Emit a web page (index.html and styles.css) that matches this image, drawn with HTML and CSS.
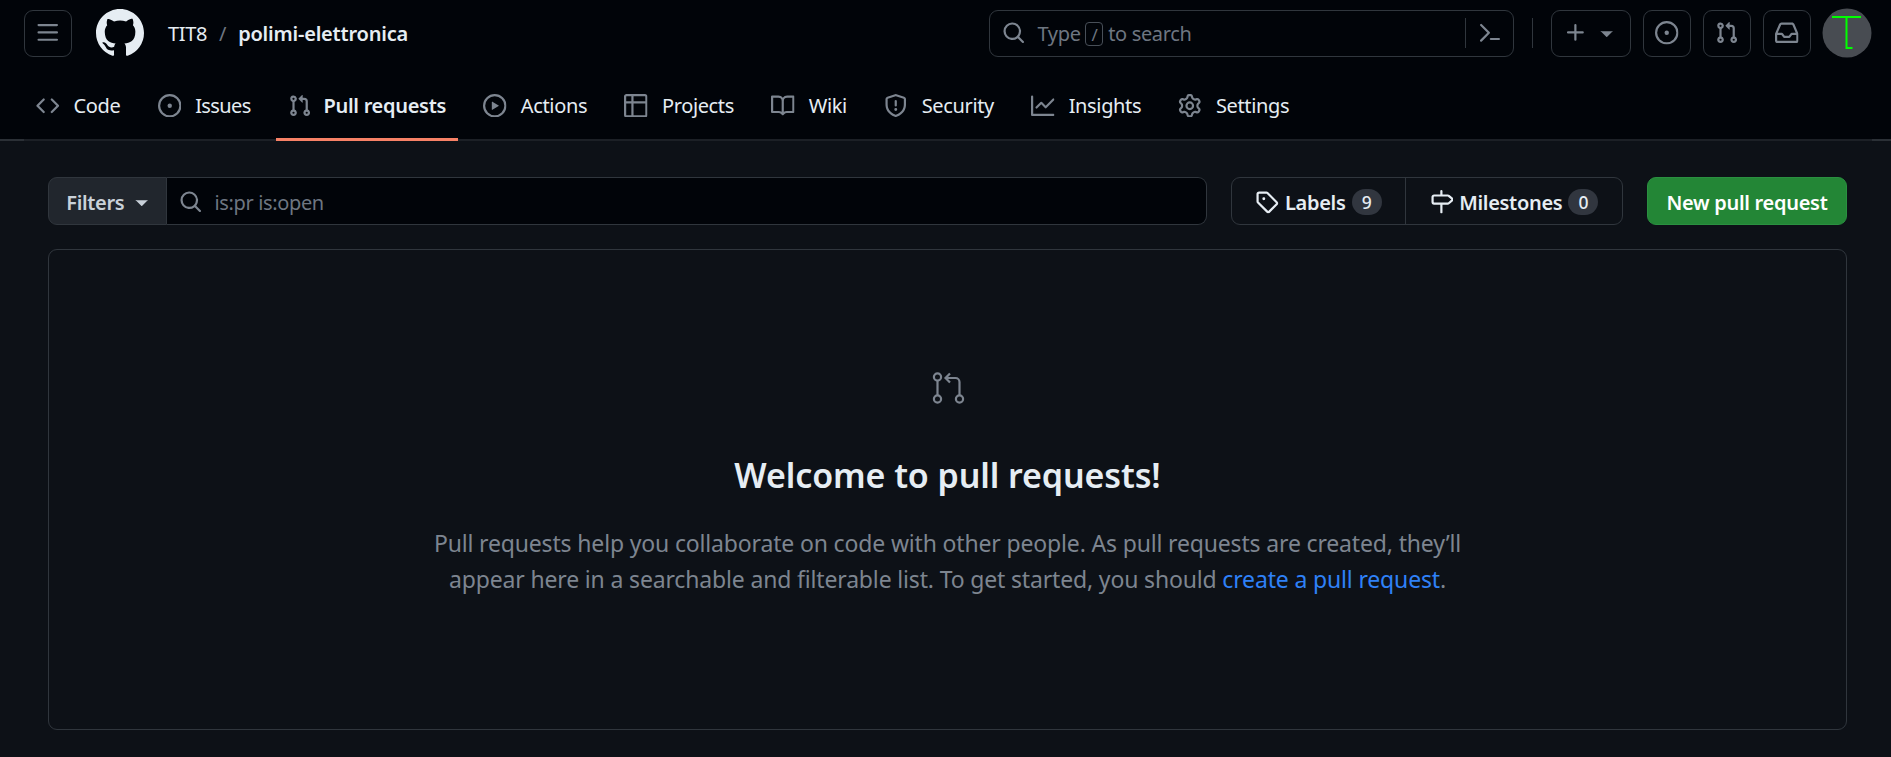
FILE: index.html
```html
<!DOCTYPE html>
<html lang="en">
<head>
    <meta charset="UTF-8">
    <meta name="viewport" content="width=device-width, initial-scale=1.0">
    <title>Pull requests · TIT8/polimi-elettronica</title>
    <link rel="stylesheet" href="styles.css">
</head>
<body>
    <svg class="sprite" xmlns="http://www.w3.org/2000/svg">
        <symbol id="i-bars" viewBox="0 0 16 16"><path d="M1 2.75A.75.75 0 0 1 1.75 2h12.5a.75.75 0 0 1 0 1.5H1.75A.75.75 0 0 1 1 2.75Zm0 5A.75.75 0 0 1 1.75 7h12.5a.75.75 0 0 1 0 1.5H1.75A.75.75 0 0 1 1 7.75ZM1.75 12h12.5a.75.75 0 0 1 0 1.5H1.75a.75.75 0 0 1 0-1.5Z"/></symbol>
        <symbol id="i-mark" viewBox="0 0 16 16"><path d="M8 0c4.42 0 8 3.58 8 8a8.013 8.013 0 0 1-5.45 7.59c-.4.08-.55-.17-.55-.38 0-.27.01-1.13.01-2.2 0-.75-.25-1.23-.54-1.48 1.78-.2 3.65-.88 3.65-3.95 0-.88-.31-1.59-.82-2.15.08-.2.36-1.02-.08-2.12 0 0-.67-.22-2.2.82-.64-.18-1.32-.27-2-.27-.68 0-1.36.09-2 .27-1.53-1.03-2.2-.82-2.2-.82-.44 1.1-.16 1.92-.08 2.12-.51.56-.82 1.28-.82 2.15 0 3.06 1.86 3.75 3.64 3.95-.23.2-.44.55-.51 1.07-.46.21-1.61.55-2.33-.66-.15-.24-.6-.83-1.23-.82-.67.01-.27.38.01.53.34.19.73.9.82 1.13.16.45.68 1.31 2.69.94 0 .67.01 1.3.01 1.49 0 .21-.15.45-.55.38A7.995 7.995 0 0 1 0 8c0-4.42 3.58-8 8-8Z"/></symbol>
        <symbol id="i-code" viewBox="0 0 16 16"><path d="m11.28 3.22 4.25 4.25a.75.75 0 0 1 0 1.06l-4.25 4.25a.749.749 0 0 1-1.275-.326.749.749 0 0 1 .215-.734L13.94 8l-3.72-3.72a.749.749 0 0 1 .326-1.275.749.749 0 0 1 .734.215Zm-6.56 0a.751.751 0 0 1 1.042.018.751.751 0 0 1 .018 1.042L2.06 8l3.72 3.72a.749.749 0 0 1-.326 1.275.749.749 0 0 1-.734-.215L.47 8.53a.75.75 0 0 1 0-1.06Z"/></symbol>
        <symbol id="i-issue" viewBox="0 0 16 16"><path d="M8 9.5a1.5 1.5 0 1 0 0-3 1.5 1.5 0 0 0 0 3Z"/><path d="M8 0a8 8 0 1 1 0 16A8 8 0 0 1 8 0ZM1.5 8a6.5 6.5 0 1 0 13 0 6.5 6.5 0 0 0-13 0Z"/></symbol>
        <symbol id="i-pr" viewBox="0 0 16 16"><path d="M1.5 3.25a2.25 2.25 0 1 1 3 2.122v5.256a2.251 2.251 0 1 1-1.5 0V5.372A2.25 2.25 0 0 1 1.5 3.25Zm5.677-.177L9.573.677A.25.25 0 0 1 10 .854V2.5h1A2.5 2.5 0 0 1 13.5 5v5.628a2.251 2.251 0 1 1-1.5 0V5a1 1 0 0 0-1-1h-1v1.646a.25.25 0 0 1-.427.177L7.177 3.427a.25.25 0 0 1 0-.354ZM3.75 2.5a.75.75 0 1 0 0 1.5.75.75 0 0 0 0-1.5Zm0 9.5a.75.75 0 1 0 0 1.5.75.75 0 0 0 0-1.5Zm8.25.75a.75.75 0 1 0 1.5 0 .75.75 0 0 0-1.5 0Z"/></symbol>
        <symbol id="i-play" viewBox="0 0 16 16"><path d="M8 0a8 8 0 1 1 0 16A8 8 0 0 1 8 0ZM1.5 8a6.5 6.5 0 1 0 13 0 6.5 6.5 0 0 0-13 0Zm4.879-2.773 4.264 2.559a.25.25 0 0 1 0 .428l-4.264 2.559A.25.25 0 0 1 6 10.559V5.442a.25.25 0 0 1 .379-.215Z"/></symbol>
        <symbol id="i-table" viewBox="0 0 16 16"><path d="M0 1.75C0 .784.784 0 1.75 0h12.5C15.216 0 16 .784 16 1.75v12.5A1.75 1.75 0 0 1 14.25 16H1.75A1.75 1.75 0 0 1 0 14.25ZM6.5 6.5v8h7.75a.25.25 0 0 0 .25-.25V6.5Zm8-1.5V1.75a.25.25 0 0 0-.25-.25H6.5V5Zm-13 1.5v7.75c0 .138.112.25.25.25H5v-8ZM5 5V1.5H1.75a.25.25 0 0 0-.25.25V5Z"/></symbol>
        <symbol id="i-book" viewBox="0 0 16 16"><path d="M0 1.75A.75.75 0 0 1 .75 1h4.253c1.227 0 2.317.59 3 1.501A3.743 3.743 0 0 1 11.006 1h4.245a.75.75 0 0 1 .75.75v10.5a.75.75 0 0 1-.75.75h-4.507a2.25 2.25 0 0 0-1.591.659l-.622.621a.75.75 0 0 1-1.06 0l-.622-.621A2.25 2.25 0 0 0 5.258 13H.75a.75.75 0 0 1-.75-.75Zm7.251 10.324.004-5.073-.002-2.253A2.25 2.25 0 0 0 5.003 2.5H1.5v9h3.757a3.75 3.75 0 0 1 1.994.574ZM8.755 4.75l-.004 7.322a3.752 3.752 0 0 1 1.992-.572H14.5v-9h-3.495a2.25 2.25 0 0 0-2.25 2.25Z"/></symbol>
        <symbol id="i-shield" viewBox="0 0 16 16"><path d="M7.467.133a1.748 1.748 0 0 1 1.066 0l5.25 1.68A1.75 1.75 0 0 1 15 3.48V7c0 1.566-.32 3.182-1.303 4.682-.983 1.498-2.585 2.813-5.032 3.855a1.697 1.697 0 0 1-1.33 0c-2.447-1.042-4.049-2.357-5.032-3.855C1.32 10.182 1 8.566 1 7V3.48a1.75 1.75 0 0 1 1.217-1.667Zm.61 1.429a.25.25 0 0 0-.153 0l-5.25 1.68a.25.25 0 0 0-.174.238V7c0 1.358.275 2.666 1.057 3.86.784 1.194 2.121 2.34 4.366 3.297a.196.196 0 0 0 .154 0c2.245-.956 3.582-2.104 4.366-3.298C13.225 9.666 13.5 8.36 13.5 7V3.48a.251.251 0 0 0-.174-.237l-5.25-1.68ZM8.75 4.75v3a.75.75 0 0 1-1.5 0v-3a.75.75 0 0 1 1.5 0ZM9 10.5a1 1 0 1 1-2 0 1 1 0 0 1 2 0Z"/></symbol>
        <symbol id="i-graph" viewBox="0 0 16 16"><path d="M1.5 1.75V13.5h13.75a.75.75 0 0 1 0 1.5H.75a.75.75 0 0 1-.75-.75V1.75a.75.75 0 0 1 1.5 0Zm14.28 2.53-5.25 5.25a.75.75 0 0 1-1.06 0L7 7.06 4.28 9.78a.751.751 0 0 1-1.042-.018.751.751 0 0 1-.018-1.042l3.25-3.25a.75.75 0 0 1 1.06 0L10 7.94l4.72-4.72a.751.751 0 0 1 1.042.018.751.751 0 0 1 .018 1.042Z"/></symbol>
        <symbol id="i-gear" viewBox="0 0 16 16"><path d="M8 0a8.2 8.2 0 0 1 .701.031C9.444.095 9.99.645 10.16 1.29l.288 1.107c.018.066.079.158.212.224.231.114.454.243.668.386.123.082.233.09.299.071l1.103-.303c.644-.176 1.392.021 1.82.63.27.385.506.792.704 1.218.315.675.111 1.422-.364 1.891l-.814.806c-.049.048-.098.147-.088.294.016.257.016.515 0 .772-.01.147.038.246.088.294l.814.806c.475.469.679 1.216.364 1.891a7.977 7.977 0 0 1-.704 1.217c-.428.61-1.176.807-1.82.63l-1.102-.302c-.067-.019-.177-.011-.3.071a5.909 5.909 0 0 1-.668.386c-.133.066-.194.158-.211.224l-.29 1.106c-.168.646-.715 1.196-1.458 1.26a8.006 8.006 0 0 1-1.402 0c-.743-.064-1.289-.614-1.458-1.26l-.289-1.106c-.018-.066-.079-.158-.212-.224a5.738 5.738 0 0 1-.668-.386c-.123-.082-.233-.09-.299-.071l-1.103.303c-.644.176-1.392-.021-1.82-.63a8.12 8.12 0 0 1-.704-1.218c-.315-.675-.111-1.422.363-1.891l.815-.806c.05-.048.098-.147.088-.294a6.214 6.214 0 0 1 0-.772c.01-.147-.038-.246-.088-.294l-.815-.806C.635 6.045.431 5.298.746 4.623a7.92 7.92 0 0 1 .704-1.217c.428-.61 1.176-.807 1.82-.63l1.102.302c.067.019.177.011.3-.071.214-.143.437-.272.668-.386.133-.066.194-.158.211-.224l.29-1.106C6.009.645 6.556.095 7.299.03 7.53.01 7.764 0 8 0Zm-.571 1.525c-.036.003-.108.036-.137.146l-.289 1.105c-.147.561-.549.967-.998 1.189-.173.086-.34.183-.5.29-.417.278-.97.423-1.529.27l-1.103-.303c-.109-.03-.175.016-.195.045-.22.312-.412.644-.573.99-.014.031-.021.11.059.19l.815.806c.411.406.562.957.53 1.456a4.709 4.709 0 0 0 0 .582c.032.499-.119 1.05-.53 1.456l-.815.806c-.081.08-.073.159-.059.19.162.346.353.677.573.989.02.03.085.076.195.046l1.102-.303c.56-.153 1.113-.008 1.53.27.161.107.328.204.501.29.447.222.85.629.997 1.189l.289 1.105c.029.109.101.143.137.146a6.6 6.6 0 0 0 1.142 0c.036-.003.108-.036.137-.146l.289-1.105c.147-.561.549-.967.998-1.189.173-.086.34-.183.5-.29.417-.278.97-.423 1.529-.27l1.103.303c.109.029.175-.016.195-.045.22-.313.411-.644.573-.99.014-.031.021-.11-.059-.19l-.815-.806c-.411-.406-.562-.957-.53-1.456a4.709 4.709 0 0 0 0-.582c-.032-.499.119-1.05.53-1.456l.815-.806c.081-.08.073-.159.059-.19a6.464 6.464 0 0 0-.573-.989c-.02-.03-.085-.076-.195-.046l-1.102.303c-.56.153-1.113.008-1.53-.27a4.44 4.44 0 0 0-.501-.29c-.447-.222-.85-.629-.997-1.189l-.289-1.105c-.029-.11-.101-.143-.137-.146a6.6 6.6 0 0 0-1.142 0ZM11 8a3 3 0 1 1-6 0 3 3 0 0 1 6 0ZM9.5 8a1.5 1.5 0 1 0-3.001.001A1.5 1.5 0 0 0 9.5 8Z"/></symbol>
        <symbol id="i-search" viewBox="0 0 16 16"><path d="M10.68 11.74a6 6 0 0 1-7.922-8.982 6 6 0 0 1 8.982 7.922l3.04 3.04a.749.749 0 0 1-.326 1.275.749.749 0 0 1-.734-.215ZM11.5 7a4.499 4.499 0 1 0-8.997 0A4.499 4.499 0 0 0 11.5 7Z"/></symbol>
        <symbol id="i-palette" viewBox="0 0 16 16"><path d="m6.354 8.04-4.773 4.773a.75.75 0 1 0 1.061 1.06L7.945 8.57a.75.75 0 0 0 0-1.06L2.642 2.206a.75.75 0 0 0-1.06 1.061L6.353 8.04ZM8.75 11.5a.75.75 0 0 0 0 1.5h5.5a.75.75 0 0 0 0-1.5h-5.5Z"/></symbol>
        <symbol id="i-plus" viewBox="0 0 16 16"><path d="M7.75 2a.75.75 0 0 1 .75.75V7h4.25a.75.75 0 0 1 0 1.5H8.5v4.25a.75.75 0 0 1-1.5 0V8.5H2.75a.75.75 0 0 1 0-1.5H7V2.75A.75.75 0 0 1 7.75 2Z"/></symbol>
        <symbol id="i-caret" viewBox="0 0 16 16"><path d="m4.427 7.427 3.396 3.396a.25.25 0 0 0 .354 0l3.396-3.396A.25.25 0 0 0 11.896 7H4.104a.25.25 0 0 0-.177.427Z"/></symbol>
        <symbol id="i-inbox" viewBox="0 0 16 16"><path d="M2.8 2.06A1.75 1.75 0 0 1 4.41 1h7.18c.7 0 1.333.417 1.61 1.06l2.74 6.395c.04.093.06.194.06.295v4.5A1.75 1.75 0 0 1 14.25 15H1.75A1.75 1.75 0 0 1 0 13.25v-4.5c0-.101.02-.202.06-.295Zm1.61.44a.25.25 0 0 0-.23.152L1.887 8H4.75a.75.75 0 0 1 .6.3L6.625 10h2.75l1.275-1.7a.75.75 0 0 1 .6-.3h2.863L11.82 2.652a.25.25 0 0 0-.23-.152Zm10.09 7h-2.875l-1.275 1.7a.75.75 0 0 1-.6.3h-3.5a.75.75 0 0 1-.6-.3L4.375 9.5H1.5v3.75c0 .138.112.25.25.25h12.5a.25.25 0 0 0 .25-.25Z"/></symbol>
        <symbol id="i-tag" viewBox="0 0 16 16"><path d="M1 7.775V2.75C1 1.784 1.784 1 2.75 1h5.025c.464 0 .91.184 1.238.513l6.25 6.25a1.75 1.75 0 0 1 0 2.474l-5.026 5.026a1.75 1.75 0 0 1-2.474 0l-6.25-6.25A1.752 1.752 0 0 1 1 7.775Zm1.5 0c0 .066.026.13.073.177l6.25 6.25a.25.25 0 0 0 .354 0l5.025-5.025a.25.25 0 0 0 0-.354l-6.25-6.25a.25.25 0 0 0-.177-.073H2.75a.25.25 0 0 0-.25.25ZM6 5a1 1 0 1 1 0 2 1 1 0 0 1 0-2Z"/></symbol>
        <symbol id="i-milestone" viewBox="0 0 16 16"><path d="M7.75 0a.75.75 0 0 1 .75.75V3h3.634c.414 0 .814.147 1.13.414l2.07 1.75a1.75 1.75 0 0 1 0 2.672l-2.07 1.75a1.75 1.75 0 0 1-1.13.414H8.5v5.25a.75.75 0 0 1-1.5 0V10H2.75A1.75 1.75 0 0 1 1 8.25v-3.5C1 3.784 1.784 3 2.75 3H7V.75A.75.75 0 0 1 7.75 0Zm4.384 8.5a.25.25 0 0 0 .161-.06l2.07-1.75a.248.248 0 0 0 0-.38l-2.07-1.75a.25.25 0 0 0-.161-.06H2.75a.25.25 0 0 0-.25.25v3.5c0 .138.112.25.25.25h9.384Z"/></symbol>
    </svg>

    <header class="app-header">
        <div class="top-row">
            <button class="icon-btn"><svg class="icon"><use href="#i-bars"/></svg></button>
            <a class="logo"><svg class="logo-mark"><use href="#i-mark"/></svg></a>
            <div class="context">
                <a>TIT8</a>
                <span class="context-sep">/</span>
                <a class="repo-name">polimi-elettronica</a>
            </div>
            <div class="top-actions">
                <div class="global-search">
                    <svg class="icon"><use href="#i-search"/></svg>
                    <span class="search-hint">Type <kbd class="slash-key">/</kbd> to search</span>
                    <span class="search-split"></span>
                    <svg class="icon"><use href="#i-palette"/></svg>
                </div>
                <span class="top-divider"></span>
                <button class="icon-btn plus-btn">
                    <svg class="icon"><use href="#i-plus"/></svg>
                    <svg class="caret"><use href="#i-caret"/></svg>
                </button>
                <button class="icon-btn"><svg class="icon"><use href="#i-issue"/></svg></button>
                <button class="icon-btn"><svg class="icon"><use href="#i-pr"/></svg></button>
                <button class="icon-btn"><svg class="icon"><use href="#i-inbox"/></svg></button>
                <svg class="avatar" viewBox="0 0 50 50">
                    <circle cx="25" cy="25" r="24.5" fill="#484c52"/>
                    <path d="M10 9h29M24.5 9v31h6" fill="none" stroke="#00ff00" stroke-width="2"/>
                </svg>
            </div>
        </div>
        <nav class="repo-nav">
            <a class="tab"><svg class="icon"><use href="#i-code"/></svg>Code</a>
            <a class="tab tab-tight"><svg class="icon"><use href="#i-issue"/></svg>Issues</a>
            <a class="tab tab-active"><svg class="icon"><use href="#i-pr"/></svg>Pull requests</a>
            <a class="tab"><svg class="icon"><use href="#i-play"/></svg>Actions</a>
            <a class="tab"><svg class="icon"><use href="#i-table"/></svg>Projects</a>
            <a class="tab"><svg class="icon"><use href="#i-book"/></svg>Wiki</a>
            <a class="tab"><svg class="icon"><use href="#i-shield"/></svg>Security</a>
            <a class="tab"><svg class="icon"><use href="#i-graph"/></svg>Insights</a>
            <a class="tab"><svg class="icon"><use href="#i-gear"/></svg>Settings</a>
        </nav>
    </header>

    <main class="content">
        <div class="toolbar">
            <div class="filter-group">
                <button class="filters-btn">Filters <svg class="caret"><use href="#i-caret"/></svg></button>
                <div class="filter-input">
                    <svg class="icon"><use href="#i-search"/></svg>
                    <span>is:pr is:open</span>
                </div>
            </div>
            <div class="label-group">
                <a class="label-link">
                    <svg class="icon"><use href="#i-tag"/></svg>Labels<span class="counter">9</span>
                </a>
                <a class="label-link">
                    <svg class="icon"><use href="#i-milestone"/></svg>Milestones<span class="counter">0</span>
                </a>
            </div>
            <button class="new-btn">New pull request</button>
        </div>

        <section class="blankslate">
            <svg class="blank-icon" viewBox="0 0 36 34" fill="none" stroke="#7d8590" stroke-width="2.2">
                <circle cx="7.500" cy="5" r="3.600"/>
                <circle cx="7.500" cy="27" r="3.600"/>
                <circle cx="29.500" cy="27" r="3.600"/>
                <path d="M7.500 8.600v14.800M29.500 23.400V10a4 4 0 0 0-4-4h-10M20 1.500 15.500 6l4.500 4.500"/>
            </svg>
            <h2 class="blank-title">Welcome to pull requests!</h2>
            <p class="blank-text">Pull requests help you collaborate on code with other people. As pull requests are created, they’ll appear here in a searchable and filterable list. To get started, you should <a class="blank-link">create a pull request</a>.</p>
        </section>
    </main>
</body>
</html>
```

FILE: styles.css
```css
body {
    margin: 0;
    background-color: #0d1117;
    color: #e6edf3;
    font-family: "Noto Sans", sans-serif;
    font-size: 20px;
    letter-spacing: -0.36px;
}
button {
    font-family: inherit;
    letter-spacing: inherit;
    cursor: pointer;
}
.sprite {
    display: none;
}
.icon {
    width: 23.5px;
    height: 23.5px;
    flex: none;
    fill: #7d8590;
}
.caret {
    width: 23.5px;
    height: 23.5px;
    flex: none;
    fill: currentColor;
}

/* header */
.app-header {
    height: 141px;
    box-sizing: border-box;
    background-color: #010409;
    box-shadow: inset 0 -2px 0 #2b3036;
    padding: 9px 19px 0 24px;
}
.top-row {
    display: flex;
    align-items: center;
    height: 48px;
}
.icon-btn {
    display: flex;
    align-items: center;
    justify-content: center;
    width: 48px;
    height: 47px;
    padding: 0;
    background: transparent;
    border: 1px solid #30363d;
    border-radius: 9px;
}
.logo {
    display: flex;
    margin-left: 24px;
}
.logo-mark {
    width: 48px;
    height: 48px;
    fill: #e6edf3;
}
.context {
    display: flex;
    align-items: center;
    gap: 12px;
    margin-left: 24px;
}
.context-sep {
    color: #6e7681;
}
.repo-name {
    font-weight: 600;
    letter-spacing: -0.2px;
}
.top-actions {
    display: flex;
    align-items: center;
    gap: 12px;
    margin-left: auto;
}
.global-search {
    display: flex;
    align-items: center;
    width: 525px;
    height: 47px;
    box-sizing: border-box;
    padding: 0 12px;
    border: 1px solid #30363d;
    border-radius: 9px;
}
.search-hint {
    flex: 1;
    margin-left: 12px;
    color: #6e7681;
}
.slash-key {
    display: inline-block;
    width: 18px;
    height: 24px;
    line-height: 22px;
    box-sizing: border-box;
    text-align: center;
    font: inherit;
    font-size: 17px;
    border: 1px solid #484f58;
    border-radius: 4px;
}
.search-split {
    width: 1px;
    height: 30px;
    margin-right: 12px;
    background-color: #30363d;
}
.top-divider {
    width: 1px;
    height: 30px;
    margin: 0 6px;
    background-color: #30363d;
}
.plus-btn {
    width: 80px;
    gap: 7px;
    color: #7d8590;
}
.avatar {
    width: 50px;
    height: 50px;
    margin-left: -1px;
}

/* repo tabs */
.repo-nav {
    display: flex;
    gap: 13.3px;
    margin-top: 13px;
    box-shadow: inset 0 -2px 0 #1c2026;
}
.tab {
    display: flex;
    align-items: center;
    gap: 14px;
    height: 71px;
    box-sizing: border-box;
    padding: 3px 12px 0;
    border-bottom: 3px solid transparent;
}
.tab-tight {
    letter-spacing: -0.6px;
}
.tab-active {
    gap: 12px;
    font-weight: 600;
    letter-spacing: -0.3px;
    border-bottom-color: #f78166;
}

/* toolbar */
.content {
    padding: 36px 44px 27px 48px;
}
.toolbar {
    display: flex;
    align-items: stretch;
    height: 48px;
}
.filter-group {
    display: flex;
    width: 1159px;
}
.filters-btn {
    display: flex;
    align-items: center;
    justify-content: center;
    gap: 6px;
    width: 119px;
    padding: 2px 0 0 5px;
    font-size: 20px;
    font-weight: 600;
    color: #c9d1d9;
    background-color: #21262d;
    border: 1px solid #30363d;
    border-radius: 9px 0 0 9px;
}
.filter-input {
    flex: 1;
    display: flex;
    align-items: center;
    gap: 12px;
    padding: 2px 0 0 12px;
    color: #6e7681;
    background-color: #010409;
    border: 1px solid #30363d;
    border-left: none;
    border-radius: 0 9px 9px 0;
}
.label-group {
    display: flex;
    width: 392px;
    box-sizing: border-box;
    margin-left: 24px;
    border: 1px solid #30363d;
    border-radius: 9px;
}
.label-link {
    display: flex;
    align-items: center;
    justify-content: center;
    gap: 6px;
    flex: none;
    width: 173px;
    padding-top: 2px;
    box-sizing: border-box;
    font-weight: 600;
    letter-spacing: -0.3px;
}
.label-link + .label-link {
    width: 217px;
    border-left: 1px solid #30363d;
}
.label-link .icon {
    fill: #e6edf3;
}
.counter {
    min-width: 30px;
    height: 26px;
    line-height: 26px;
    box-sizing: border-box;
    padding: 0 9px;
    text-align: center;
    font-size: 17.5px;
    font-weight: 500;
    background-color: #31363f;
    border-radius: 15px;
}
.new-btn {
    width: 200px;
    margin-left: 24px;
    padding: 2px 0 0;
    font-size: 20px;
    font-weight: 600;
    letter-spacing: -0.3px;
    color: #ffffff;
    background-color: #238636;
    border: 1px solid #2a9040;
    border-radius: 9px;
}

/* empty state */
.blankslate {
    height: 481px;
    box-sizing: border-box;
    margin-top: 24px;
    padding-top: 122px;
    text-align: center;
    border: 1px solid #30363d;
    border-radius: 9px;
}
.blank-icon {
    display: block;
    width: 36px;
    height: 34px;
    margin: 0 auto;
}
.blank-title {
    margin: 47px 0 0;
    font-size: 34px;
    line-height: 44px;
    font-weight: 600;
    letter-spacing: -0.1px;
}
.blank-text {
    width: 1040px;
    margin: 28px auto 0;
    font-size: 23px;
    line-height: 36px;
    letter-spacing: -0.16px;
    color: #7d8590;
}
.blank-link {
    color: #2f81f7;
}
```
